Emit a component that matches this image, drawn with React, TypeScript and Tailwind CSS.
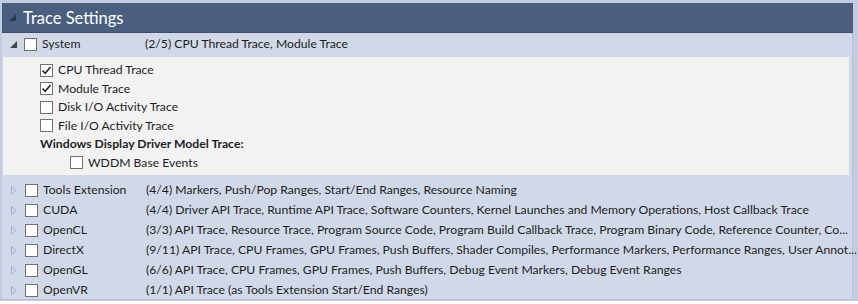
const rows = [
  { name: 'Tools Extension', desc: '(4/4) Markers, Push/Pop Ranges, Start/End Ranges, Resource Naming' },
  { name: 'CUDA', desc: '(4/4) Driver API Trace, Runtime API Trace, Software Counters, Kernel Launches and Memory Operations, Host Callback Trace' },
  { name: 'OpenCL', desc: '(3/3) API Trace, Resource Trace, Program Source Code, Program Build Callback Trace, Program Binary Code, Reference Counter, Co...' },
  { name: 'DirectX', desc: '(9/11) API Trace, CPU Frames, GPU Frames, Push Buffers, Shader Compiles, Performance Markers, Performance Ranges, User Annot...' },
  { name: 'OpenGL', desc: '(6/6) API Trace, CPU Frames, GPU Frames, Push Buffers, Debug Event Markers, Debug Event Ranges' },
  { name: 'OpenVR', desc: '(1/1) API Trace (as Tools Extension Start/End Ranges)' },
]

function Box({ checked }: { checked?: boolean }) {
  return (
    <span className="w-[13px] h-[13px] border border-[#707070] bg-white flex items-center justify-center shrink-0">
      {checked && (
        <svg width="11" height="11" viewBox="0 0 11 11">
          <path d="M1.5 5.5 L4.2 8.3 L9.5 2" fill="none" stroke="#222" strokeWidth="1.6" />
        </svg>
      )}
    </span>
  )
}

function Collapsed() {
  return (
    <svg width="6" height="9" viewBox="0 0 6 9" className="shrink-0">
      <path d="M0.5 0.5 L5 4.5 L0.5 8.5 Z" fill="none" stroke="#a6b0c4" />
    </svg>
  )
}

function Expanded({ color = '#444' }: { color?: string }) {
  return (
    <svg width="7" height="7" viewBox="0 0 7 7" className="shrink-0">
      <path d="M7 0 L7 7 L0 7 Z" fill={color} />
    </svg>
  )
}

export default function App() {
  return (
    <div className="w-[858px] h-[304px] bg-white text-[12.2px] text-[#1e1e1e]" style={{ fontFamily: '"Segoe UI", Lato, sans-serif' }}>
      <div className="h-[301px] bg-[#c3cce0] pt-[2px] px-[2px] pr-[5px] pb-[1px] flex flex-col">
        <div className="h-[30px] mt-[1px] shrink-0 bg-[#4a5e80] flex items-center pl-[7px] gap-[7px] border-b border-[#3d4f6e]">
          <Expanded color="#2c3a52" />
          <span className="text-white text-[16.5px] mt-[2px]">Trace Settings</span>
        </div>
        <div className="flex-1 min-h-0 bg-[#d1d9e8] border-r border-b border-[#b7c1d8] flex flex-col">
          <div className="h-[23px] shrink-0 flex items-center pl-[8px] whitespace-nowrap">
            <Expanded />
            <span className="ml-[7px]"><Box /></span>
            <span className="ml-[5px] w-[103px] shrink-0">System</span>
            <span>(2/5) CPU Thread Trace, Module Trace</span>
          </div>
          <div className="ml-[1px] mr-[3px] mt-[1px] h-[118px] shrink-0 bg-[#f2f2f2] pl-[37px] pt-[4px] flex flex-col">
            {[
              ['CPU Thread Trace', true],
              ['Module Trace', true],
              ['Disk I/O Activity Trace', false],
              ['File I/O Activity Trace', false],
            ].map(([label, checked]) => (
              <div key={label as string} className="h-[18.5px] shrink-0 flex items-center gap-[5px]">
                <Box checked={checked as boolean} />
                <span>{label}</span>
              </div>
            ))}
            <div className="h-[18.5px] shrink-0 flex items-center font-bold">Windows Display Driver Model Trace:</div>
            <div className="h-[18.5px] shrink-0 flex items-center gap-[5px] pl-[30px]">
              <Box />
              <span>WDDM Base Events</span>
            </div>
          </div>
          <div className="mt-[5px] flex flex-col">
            {rows.map((r) => (
              <div key={r.name} className="h-[20px] shrink-0 flex items-center pl-[9px] whitespace-nowrap">
                <Collapsed />
                <span className="ml-[8px]"><Box /></span>
                <span className="ml-[5px] w-[103px] shrink-0">{r.name}</span>
                <span>{r.desc}</span>
              </div>
            ))}
          </div>
        </div>
      </div>
    </div>
  )
}
